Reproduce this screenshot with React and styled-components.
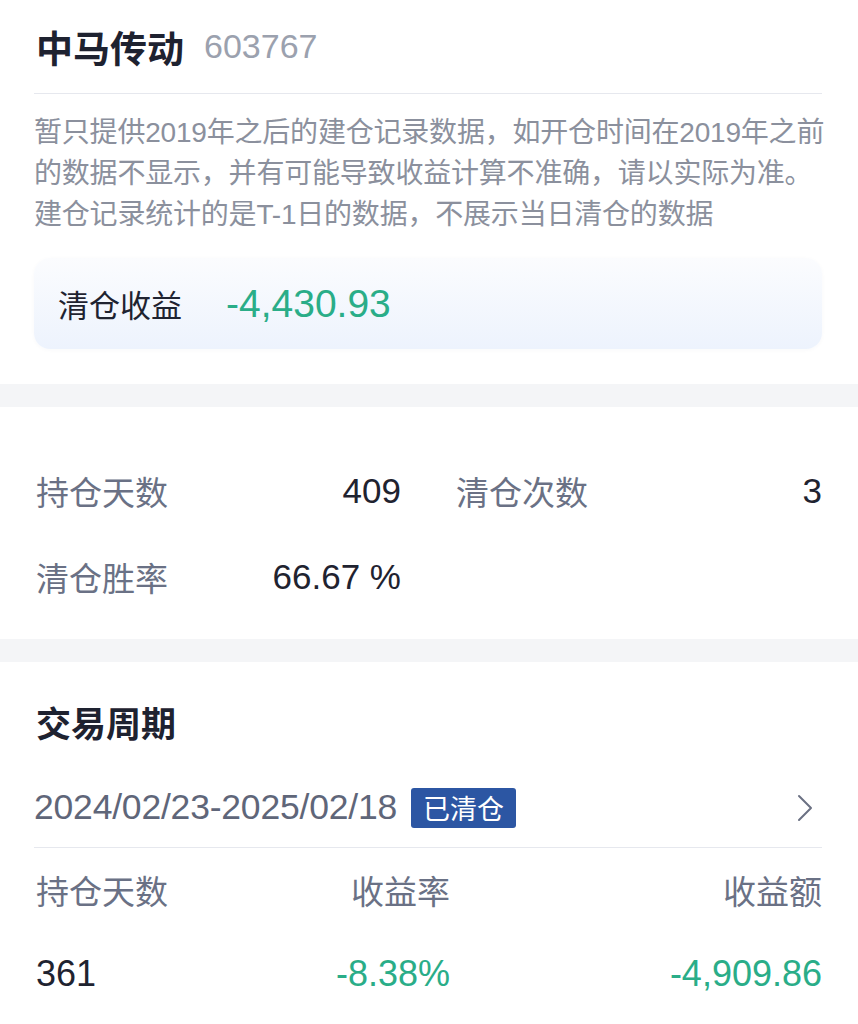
import React from "react";
import styled, { createGlobalStyle } from "styled-components";

const GlobalStyle = createGlobalStyle`
  body {
    margin: 0;
    background: #fff;
    font-family: "Liberation Sans", "Noto Sans CJK SC", sans-serif;
  }
`;

function App() {
  return (
    <Page>
      <GlobalStyle />
      <Top>
        <TitleRow>
          <Name>中马传动</Name>
          <Code>603767</Code>
        </TitleRow>
        <Notice>
          暂只提供2019年之后的建仓记录数据，如开仓时间在2019年之前
          <br />
          的数据不显示，并有可能导致收益计算不准确，请以实际为准。
          <br />
          建仓记录统计的是T-1日的数据，不展示当日清仓的数据
        </Notice>
        <ProfitCard>
          <CardLabel>清仓收益</CardLabel>
          <CardValue>-4,430.93</CardValue>
        </ProfitCard>
      </Top>
      <Band />
      <Stats>
        <StatItem>
          <StatLabel>持仓天数</StatLabel>
          <StatValue>409</StatValue>
        </StatItem>
        <StatItem>
          <StatLabel>清仓次数</StatLabel>
          <StatValue>3</StatValue>
        </StatItem>
        <StatItem>
          <StatLabel>清仓胜率</StatLabel>
          <StatValue>66.67 %</StatValue>
        </StatItem>
      </Stats>
      <Band />
      <Period>
        <Heading>交易周期</Heading>
        <DateRow>
          <DateText>2024/02/23-2025/02/18</DateText>
          <Tag>已清仓</Tag>
          <Chevron width="18" height="28" viewBox="0 0 18 28">
            <polyline
              points="3,2 15,14 3,26"
              fill="none"
              stroke="#6b7183"
              strokeWidth="2"
              strokeLinecap="round"
              strokeLinejoin="round"
            />
          </Chevron>
        </DateRow>
        <Table>
          <HeadCell>持仓天数</HeadCell>
          <HeadCell align="right">收益率</HeadCell>
          <HeadCell align="right">收益额</HeadCell>
          <ValueCell>361</ValueCell>
          <ValueCell align="right" green>
            -8.38%
          </ValueCell>
          <ValueCell align="right" green>
            -4,909.86
          </ValueCell>
        </Table>
      </Period>
    </Page>
  );
}

export default App;

const Page = styled.div`
  width: 858px;
  background: #fff;
`;

const Top = styled.div`
  padding: 0 36px 35px 34px;
`;

const TitleRow = styled.div`
  display: flex;
  align-items: center;
  gap: 20px;
  height: 94px;
  padding-left: 2px;
  border-bottom: 1px solid #e6e8ee;
  box-sizing: border-box;
`;

const Name = styled.div`
  font-size: 37px;
  font-weight: 700;
  color: #1e2230;
`;

const Code = styled.div`
  font-size: 34px;
  color: #9ba1ae;
`;

const Notice = styled.div`
  margin-top: 18px;
  font-size: 28px;
  line-height: 41px;
  color: #8b909d;
  white-space: nowrap;
  letter-spacing: -0.2px;
`;

const ProfitCard = styled.div`
  margin-top: 23px;
  height: 91px;
  border-radius: 16px;
  background: linear-gradient(180deg, #fbfcfe 0%, #edf3fd 100%);
  box-shadow: 0 1px 4px rgba(40, 60, 100, 0.03);
  display: flex;
  align-items: center;
  padding-left: 24px;
  gap: 44px;
`;

const CardLabel = styled.div`
  font-size: 31px;
  color: #1f2330;
`;

const CardValue = styled.div`
  font-size: 39px;
  color: #2aad88;
`;

const Band = styled.div`
  height: 23px;
  background: #f4f5f7;
`;

const Stats = styled.div`
  display: grid;
  grid-template-columns: 365px 366px;
  column-gap: 55px;
  padding: 41px 36px 19px 36px;
`;

const StatItem = styled.div`
  height: 86px;
  display: flex;
  align-items: center;
  justify-content: space-between;
`;

const StatLabel = styled.div`
  font-size: 33px;
  color: #6a7185;
`;

const StatValue = styled.div`
  font-size: 35px;
  color: #1f2330;
`;

const Period = styled.div`
  padding: 38px 36px 0 34px;
`;

const Heading = styled.div`
  font-size: 35px;
  font-weight: 700;
  color: #1e2230;
  line-height: 50px;
  padding-left: 2px;
`;

const DateRow = styled.div`
  margin-top: 18px;
  height: 80px;
  display: flex;
  align-items: center;
  border-bottom: 1px solid #e6e8ee;
  box-sizing: border-box;
`;

const DateText = styled.div`
  font-size: 35.5px;
  color: #5f6679;
  letter-spacing: -0.2px;
`;

const Tag = styled.div`
  margin-left: 14px;
  height: 40px;
  padding: 0 12px;
  display: flex;
  align-items: center;
  border-radius: 3px;
  background: #2c56a3;
  color: #fff;
  font-size: 27px;
`;

const Chevron = styled.svg`
  margin-left: auto;
  margin-right: 8px;
`;

const Table = styled.div`
  display: grid;
  grid-template-columns: 264px 150px 1fr;
  grid-auto-rows: 84px;
  align-items: center;
  padding-left: 2px;
`;

const HeadCell = styled.div`
  font-size: 33px;
  color: #6a7185;
  text-align: ${(p) => p.align || "left"};
`;

const ValueCell = styled.div`
  font-size: 36px;
  color: ${(p) => (p.green ? "#2aad88" : "#1f2330")};
  text-align: ${(p) => p.align || "left"};
`;
